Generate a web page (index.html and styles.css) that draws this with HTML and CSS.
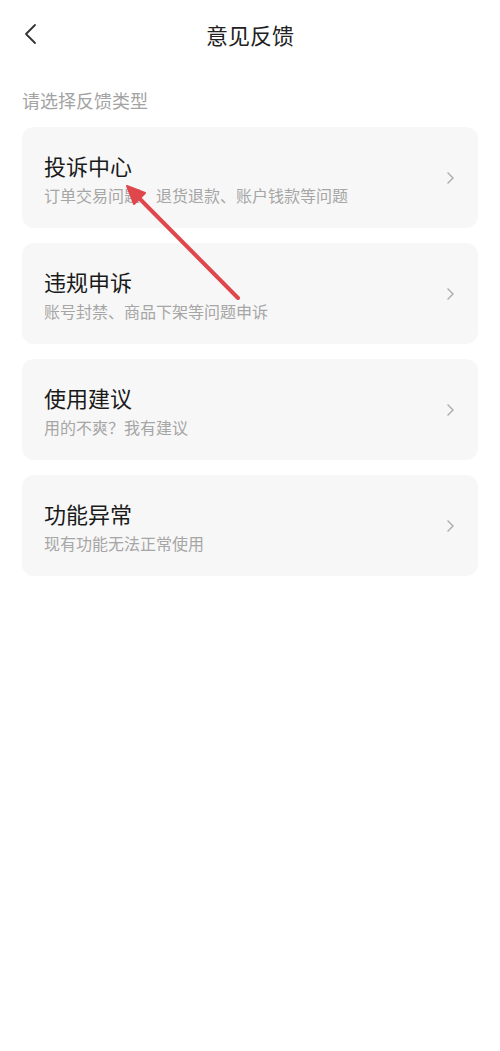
FILE: index.html
```html
<!DOCTYPE html>
<html lang="zh-CN">
<head>
<meta charset="utf-8">
<title>意见反馈</title>
<link rel="stylesheet" href="styles.css">
</head>
<body>
<div class="page">
  <header class="topbar">
    <span class="back">
      <svg width="14" height="22" viewBox="0 0 14 22"><path d="M12 2 L3 11 L12 20" fill="none" stroke="#333" stroke-width="1.8" stroke-linecap="round" stroke-linejoin="round"/></svg>
    </span>
    <h1 class="title">意见反馈</h1>
  </header>
  <div class="label">请选择反馈类型</div>
  <div class="list">
    <div class="card">
      <div class="text">
        <div class="card-title">投诉中心</div>
        <div class="card-sub">订单交易问题、退货退款、账户钱款等问题</div>
      </div>
      <svg class="chev" width="7" height="12" viewBox="0 0 7 12"><path d="M1 1 L6 6 L1 11" fill="none" stroke="#aaa" stroke-width="1.4" stroke-linecap="round" stroke-linejoin="round"/></svg>
    </div>
    <div class="card">
      <div class="text">
        <div class="card-title">违规申诉</div>
        <div class="card-sub">账号封禁、商品下架等问题申诉</div>
      </div>
      <svg class="chev" width="7" height="12" viewBox="0 0 7 12"><path d="M1 1 L6 6 L1 11" fill="none" stroke="#aaa" stroke-width="1.4" stroke-linecap="round" stroke-linejoin="round"/></svg>
    </div>
    <div class="card">
      <div class="text">
        <div class="card-title">使用建议</div>
        <div class="card-sub">用的不爽？我有建议</div>
      </div>
      <svg class="chev" width="7" height="12" viewBox="0 0 7 12"><path d="M1 1 L6 6 L1 11" fill="none" stroke="#aaa" stroke-width="1.4" stroke-linecap="round" stroke-linejoin="round"/></svg>
    </div>
    <div class="card">
      <div class="text">
        <div class="card-title">功能异常</div>
        <div class="card-sub">现有功能无法正常使用</div>
      </div>
      <svg class="chev" width="7" height="12" viewBox="0 0 7 12"><path d="M1 1 L6 6 L1 11" fill="none" stroke="#aaa" stroke-width="1.4" stroke-linecap="round" stroke-linejoin="round"/></svg>
    </div>
  </div>
  <svg class="arrow" width="500" height="320" viewBox="0 0 500 320">
    <line x1="238" y1="298" x2="136" y2="195" stroke="#e0474c" stroke-width="4" stroke-linecap="round"/>
    <polygon points="127,186 145,193 134,204" fill="#e0474c" stroke="#e0474c" stroke-width="2" stroke-linejoin="round"/>
  </svg>
</div>
</body>
</html>
```

FILE: styles.css
```css
* { box-sizing: border-box; }
html, body { margin: 0; padding: 0; background: #fff; }
body {
  font-family: "Noto Sans CJK SC", "Noto Sans", sans-serif;
  color: #1f1f1f;
}
.page {
  position: relative;
  width: 500px;
  min-height: 1051px;
}
.topbar {
  height: 68px;
  display: flex;
  align-items: center;
  justify-content: center;
  position: relative;
}
.back {
  position: absolute;
  left: 23px;
  top: 23px;
  display: flex;
}
.title {
  margin: 0;
  font-size: 22px;
  line-height: 22px;
  font-weight: normal;
  color: #222;
}
.label {
  margin: 23px 0 18px 22px;
  font-size: 18px;
  line-height: 18px;
  color: #a3a3a3;
}
.list {
  display: flex;
  flex-direction: column;
  gap: 15px;
  padding: 0 22px;
}
.card {
  height: 101px;
  background: #f7f7f7;
  border-radius: 12px;
  display: flex;
  align-items: center;
  justify-content: space-between;
  padding: 0 24px 0 22px;
}
.text {
  display: flex;
  flex-direction: column;
  gap: 11px;
  padding-top: 1px;
}
.card-title {
  font-size: 22px;
  line-height: 22px;
  color: #1a1a1a;
}
.card-sub {
  font-size: 16px;
  line-height: 16px;
  color: #a6a6a6;
}
.chev { display: block; }
.arrow {
  position: absolute;
  left: 0;
  top: 0;
  pointer-events: none;
}
```
